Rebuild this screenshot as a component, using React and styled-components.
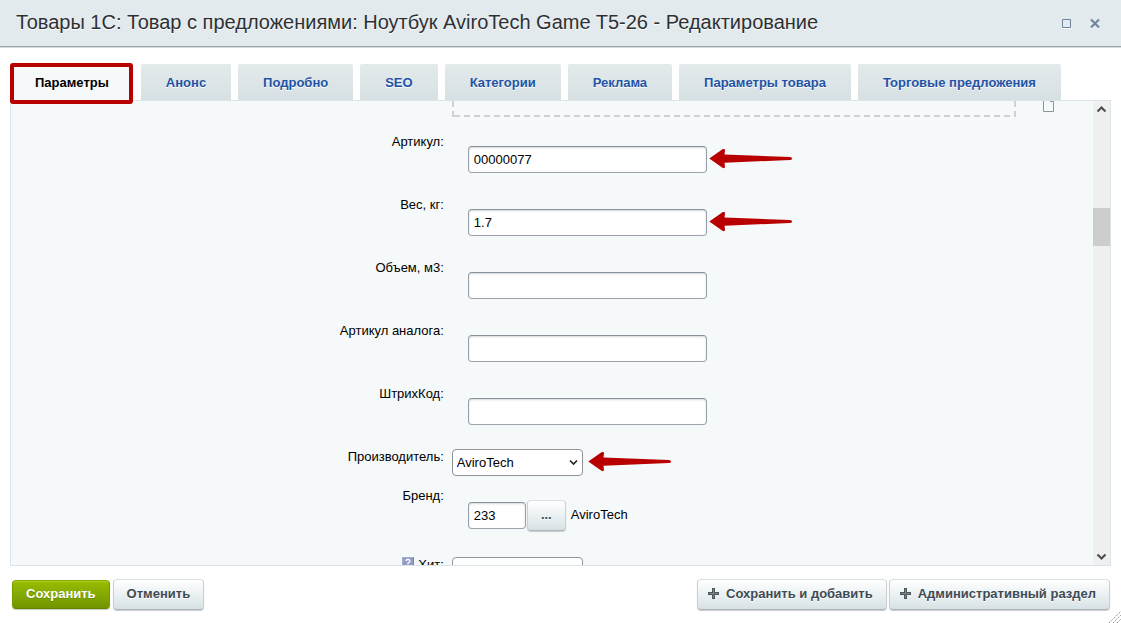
import React, { useState } from 'react';

import styled, { createGlobalStyle } from 'styled-components';

/*
 * styled components
 */

const GlobalStyle = createGlobalStyle`
  * {
    box-sizing: border-box;
  }

  body {
    background: #ffffff;
    color: #000000;
    font-family: "Liberation Sans", Arial, sans-serif;
    font-size: 13px;
    margin: 0;
  }

  button, input, select {
    color: inherit;
    font: inherit;
    margin: 0;
  }
`;

const Window = styled.div`
  display: flex;
  flex-direction: column;
  height: 100vh;
  overflow: hidden;
`;

const Header = styled.header`
  align-items: flex-start;
  background: #e2eaed;
  border-bottom: 1px solid #9fa3a5;
  box-shadow: 0 1px 0 #d8dbdc;
  display: flex;
  flex: 0 0 auto;
  gap: 8px;
  padding: 10px 16px 8px;
`;

const Title = styled.h1`
  color: #2d3033;
  flex: 1;
  font-size: 20px;
  font-weight: normal;
  line-height: 24px;
  margin: 0;
  text-shadow: 0 1px 0 #ffffff;
`;

const WindowButton = styled.button`
  background: none;
  border: 0;
  display: flex;
  height: 28px;
  padding: 8px 5px;
  width: 20px;
`;

const Tabs = styled.nav`
  display: flex;
  flex: 0 0 auto;
  gap: 7px;
  padding: 17px 10px 0;
`;

const Tab = styled.button`
  background: ${({ $active }) => ($active ? '#f5f9f9' : 'linear-gradient(#e3eaec, #d6e0e2)')};
  border: 0;
  border-radius: 2px 2px 0 0;
  color: ${({ $active }) => ($active ? '#000000' : '#1f53a5')};
  font-weight: bold;
  height: 36px;
  line-height: 16px;
  padding: 2px 25px 0;
  position: relative;
  text-shadow: 0 1px 0 #ffffff;
  white-space: nowrap;
`;

const Highlight = styled.span`
  border: 4px solid #b90000;
  border-radius: 3px;
  inset: -1px 1px -4px 0;
  pointer-events: none;
  position: absolute;
  z-index: 1;
`;

const Panel = styled.main`
  background: #f5f9f9;
  border: 1px solid #d9e5eb;
  display: flex;
  flex: 1;
  margin: 0 10px;
  min-height: 0;
`;

const Form = styled.form`
  flex: 1;
  overflow: hidden;
`;

const Row = styled.div`
  display: grid;
  grid-template-columns: 40% 1fr;
  min-height: ${({ $height }) => $height}px;
`;

const Label = styled.label`
  align-items: flex-start;
  align-self: start;
  display: flex;
  gap: 4px;
  justify-content: flex-end;
  line-height: 16px;
  padding-top: 6px;
`;

const Field = styled.div`
  align-items: center;
  align-self: start;
  display: flex;
  gap: ${({ $gap }) => $gap || 2}px;
  padding: ${({ $nested }) => ($nested ? '18px 0 0 24px' : '6px 0 0 8px')};
`;

const DropZone = styled.div`
  --dash: #d0d0d2 0 6px, transparent 6px 10px;
  background:
    repeating-linear-gradient(to right, var(--dash)) 2px 100% / 100% 2px no-repeat,
    repeating-linear-gradient(to top, var(--dash)) 0 0 / 2px 100% no-repeat,
    repeating-linear-gradient(to top, var(--dash)) 100% 0 / 2px 100% no-repeat;
  flex: 1;
  height: 16px;
`;

const DropField = styled.div`
  align-items: flex-start;
  display: flex;
  gap: 27px;
  padding: 0 38px 0 8px;
`;

const Input = styled.input`
  background: #ffffff;
  border: 1px solid;
  border-color: #87919c #959ea9 #9ca3af;
  border-radius: 4px;
  box-shadow: inset 0 1px 2px #d5d9dc;
  height: 27px;
  padding: 0 5px;
  width: ${({ $short }) => ($short ? 58 : 239)}px;
`;

const SelectBox = styled.span`
  align-items: center;
  display: grid;
  width: 131px;

  > * {
    grid-area: 1 / 1;
  }

  > svg {
    justify-self: end;
    margin-right: 5px;
    pointer-events: none;
  }
`;

const Select = styled.select`
  appearance: none;
  background: #ffffff;
  border: 1px solid #919498;
  border-radius: 4px;
  height: 27px;
  padding: 0 4px;
  width: 100%;
`;

const Button = styled.button`
  align-items: center;
  background: ${({ $primary }) => ($primary ? 'linear-gradient(#98bd00, #719500)' : 'linear-gradient(#ffffff, #d7e2e5)')};
  border: 1px solid;
  border-color: ${({ $primary }) => ($primary ? '#86a800 #799b00 #668500' : '#dce1e3 #c9cfd2 #adb5b8')};
  border-radius: 4px;
  box-shadow: ${({ $primary }) => ($primary ? 'inset 0 1px 0 #b0cd20, 0 1px 1px #c6cbc0' : '0 1px 1px #c8cdcf')};
  color: ${({ $primary }) => ($primary ? '#ffffff' : '#3f4b54')};
  display: flex;
  font-weight: bold;
  gap: 7px;
  height: ${({ $primary }) => ($primary ? 29 : 31)}px;
  justify-content: center;
  line-height: 16px;
  min-width: 39px;
  padding: ${({ $icon }) => ($icon ? '0 13px 2px 10px' : '0 13px 2px')};
  text-shadow: ${({ $primary }) => ($primary ? '0 1px 0 #678a00' : '0 1px 0 #ffffff')};
  white-space: nowrap;
`;

const LinkedName = styled.span`
  line-height: 16px;
  padding: 0 0 1px 4px;
`;

const Scrollbar = styled.div`
  align-items: center;
  background: #f0f0f0;
  display: flex;
  flex: 0 0 17px;
  flex-direction: column;
`;

const ScrollButton = styled.button`
  background: none;
  border: 0;
  display: flex;
  flex: 0 0 17px;
  padding: 4px 3px;
  width: 17px;
`;

const ScrollTrack = styled.div`
  flex: 1;
  padding-top: 90px;
  width: 100%;
`;

const ScrollThumb = styled.div`
  background: #cdcdcd;
  height: 38px;
`;

const Footer = styled.footer`
  align-items: center;
  display: flex;
  flex: 0 0 57px;
  justify-content: space-between;
  padding: 0 11px 0 12px;
  position: relative;
`;

const ButtonGroup = styled.div`
  align-items: center;
  display: flex;
  gap: ${({ $gap }) => $gap}px;
`;

const Grip = styled.svg`
  bottom: 0;
  position: absolute;
  right: 0;
`;

/*
 * drawings
 */

const Arrow = () => (
  <svg width="84" height="22" viewBox="0 1 84 22" aria-hidden="true">
    <path
        d="M1 11 Q0 10.5 1 10 L13.5 1.2 Q16 0.2 16 2.5 L15.5 6.5 L81 9 Q83 9.2 83 10.5 Q83 12 81 12 L15.5 14.8 L16 18.5 Q16 21 13.5 19.8 Z"
        fill="#b90000" />
  </svg>
);

const Chevron = () => (
  <svg width="9" height="7" viewBox="0 0 9 7" aria-hidden="true">
    <path d="M1 1.5 L4.5 5 L8 1.5" fill="none" stroke="#222222" strokeWidth="1.6" />
  </svg>
);

const ScrollArrow = ({ up }) => (
  <svg width="11" height="9" viewBox="0 0 11 9" aria-hidden="true">
    <path
        d={up ? 'M1.5 6.5 L5.5 2.5 L9.5 6.5' : 'M1.5 2.5 L5.5 6.5 L9.5 2.5'}
        fill="none"
        stroke="#505050"
        strokeWidth="2.2" />
  </svg>
);

const Plus = () => (
  <svg width="11" height="11" viewBox="0 0 11 11" aria-hidden="true">
    <path d="M4 0 H7 V4 H11 V7 H7 V11 H4 V7 H0 V4 H4 Z" fill="#4b565d" />
    <path d="M5 1 H6 V5 H10 V6 H6 V10 H5 V6 H1 V5 H5 Z" fill="#7a848a" />
  </svg>
);

const PageIcon = () => (
  <svg width="12" height="12" viewBox="0 0 12 12" aria-hidden="true">
    <path d="M0.5 0 V10.5 H10.5 V0.5 H7" fill="#f5f9f9" stroke="#8e9499" />
  </svg>
);

const HelpIcon = () => (
  <svg width="12" height="12" viewBox="0 0 12 12" aria-hidden="true">
    <rect width="12" height="12" fill="#7984b4" />
    <path d="M0 0 H12 L0 12 Z" fill="#a3add2" />
    <rect x="1" y="1" width="10" height="10" fill="#919bc5" />
    <path d="M4 4 Q4 2.5 6 2.5 Q8 2.5 8 4 Q8 5.2 6 6 V7.5 M6 8.5 V10" fill="none" stroke="#ffffff" strokeWidth="1.3" />
  </svg>
);

/*
 * data
 */

const TABS = [
  'Параметры',
  'Анонс',
  'Подробно',
  'SEO',
  'Категории',
  'Реклама',
  'Параметры товара',
  'Торговые предложения',
];

const PROPERTIES = [
  { id: 'article', label: 'Артикул:', value: '00000077', marked: true },
  { id: 'weight', label: 'Вес, кг:', value: '1.7', marked: true },
  { id: 'volume', label: 'Объем, м3:', value: '' },
  { id: 'analog', label: 'Артикул аналога:', value: '' },
  { id: 'barcode', label: 'ШтрихКод:', value: '' },
];

const App = () => {

  const [activeTab, setActiveTab] = useState(TABS[0]);

  return (
    <Window>
      <GlobalStyle />
      <Header>
        <Title>
          Товары 1С: Товар с предложениями: Ноутбук AviroTech Game T5-26 - Редактирование
        </Title>
        <WindowButton type="button" aria-label="Развернуть">
          <svg width="10" height="11" viewBox="0 0 10 11">
            <path d="M0.5 1.5 H8.5 V9.5 H0.5 Z" fill="none" stroke="#72839f" />
            <path d="M0 10.5 H9" stroke="#ffffff" />
          </svg>
        </WindowButton>
        <WindowButton type="button" aria-label="Закрыть">
          <svg width="10" height="11" viewBox="0 0 10 11">
            <path d="M1 2.5 L9 10.5 M9 2.5 L1 10.5" stroke="#f4f8f9" strokeWidth="2" />
            <path d="M1 1.5 L9 9.5 M9 1.5 L1 9.5" stroke="#72839f" strokeWidth="2.2" />
          </svg>
        </WindowButton>
      </Header>
      <Tabs>
        {
          TABS.map((tab) => (
            <Tab key={tab} type="button" $active={tab === activeTab} onClick={() => setActiveTab(tab)}>
              {tab}
              {tab === TABS[0] && <Highlight />}
            </Tab>
          ))
        }
      </Tabs>
      <Panel>
        <Form>
          <Row $height={27}>
            <span />
            <DropField>
              <DropZone />
              <PageIcon />
            </DropField>
          </Row>
          {
            PROPERTIES.map(({ id, label, value, marked }) => (
              <Row key={id} $height={63}>
                <Label htmlFor={id}>{label}</Label>
                <Field $nested>
                  <Input id={id} type="text" defaultValue={value} />
                  {marked && <Arrow />}
                </Field>
              </Row>
            ))
          }
          <Row $height={39}>
            <Label htmlFor="vendor">Производитель:</Label>
            <Field $gap={5}>
              <SelectBox>
                <Select id="vendor" defaultValue="AviroTech">
                  <option>AviroTech</option>
                </Select>
                <Chevron />
              </SelectBox>
              <Arrow />
            </Field>
          </Row>
          <Row $height={69}>
            <Label htmlFor="brand">Бренд:</Label>
            <Field $nested $gap={1}>
              <Input id="brand" type="text" defaultValue="233" $short />
              <Button type="button">...</Button>
              <LinkedName>AviroTech</LinkedName>
            </Field>
          </Row>
          <Row $height={39}>
            <Label htmlFor="hit">
              <HelpIcon />
              Хит:
            </Label>
            <Field>
              <SelectBox>
                <Select id="hit" />
              </SelectBox>
            </Field>
          </Row>
        </Form>
        <Scrollbar>
          <ScrollButton type="button" aria-label="Вверх"><ScrollArrow up /></ScrollButton>
          <ScrollTrack>
            <ScrollThumb />
          </ScrollTrack>
          <ScrollButton type="button" aria-label="Вниз"><ScrollArrow /></ScrollButton>
        </Scrollbar>
      </Panel>
      <Footer>
        <ButtonGroup $gap={3}>
          <Button type="submit" $primary>Сохранить</Button>
          <Button type="button">Отменить</Button>
        </ButtonGroup>
        <ButtonGroup $gap={2}>
          <Button type="button" $icon>
            <Plus />
            Сохранить и добавить
          </Button>
          <Button type="button" $icon>
            <Plus />
            Административный раздел
          </Button>
        </ButtonGroup>
        <Grip width="12" height="12" viewBox="0 0 12 12" aria-hidden="true">
          <path d="M0 12 L12 0 M4 12 L12 4 M8 12 L12 8" stroke="#8f8f8f" strokeDasharray="1.4 1" />
        </Grip>
      </Footer>
    </Window>
  );
};

export default App;
